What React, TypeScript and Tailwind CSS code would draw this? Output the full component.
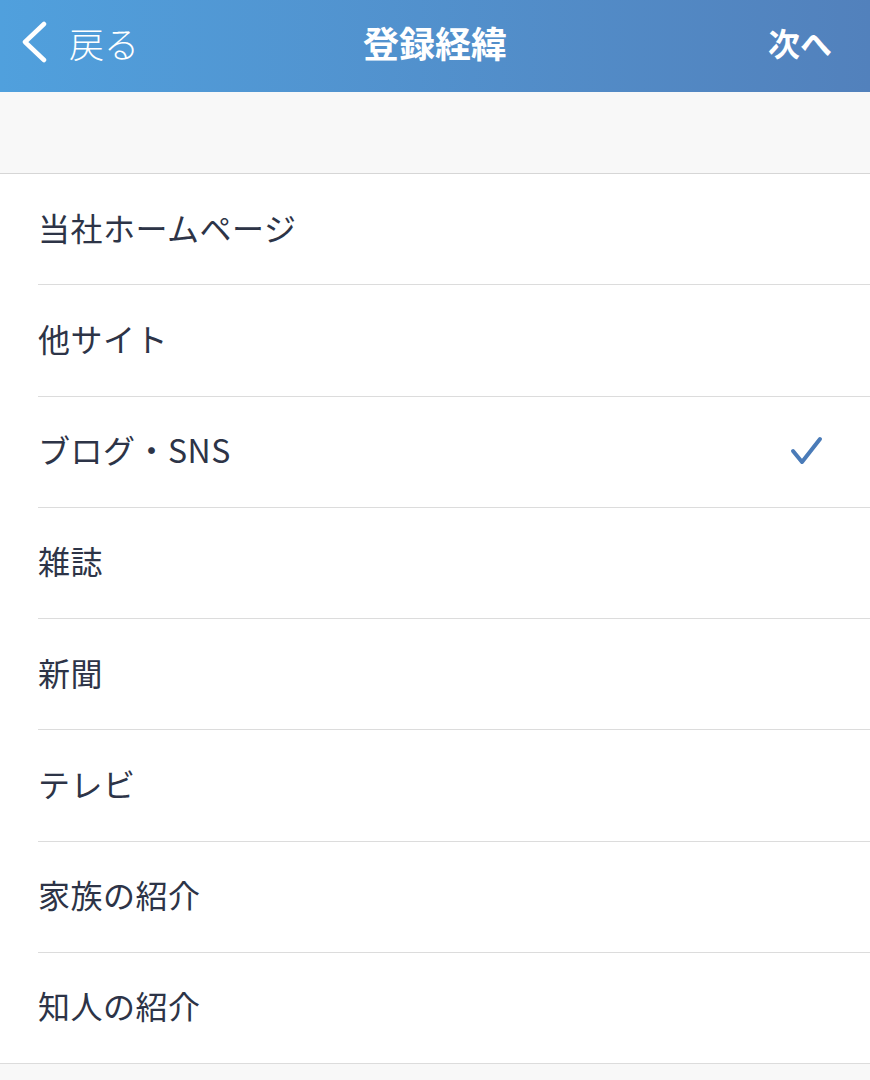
import { useState } from 'react';

const options = [
  '当社ホームページ',
  '他サイト',
  'ブログ・SNS',
  '雑誌',
  '新聞',
  'テレビ',
  '家族の紹介',
  '知人の紹介',
];

export default function App() {
  const [selected, setSelected] = useState(2);

  return (
    <div
      className="w-[870px] h-[1080px] bg-[#f8f8f8] overflow-hidden"
      style={{ fontFamily: '"Noto Sans CJK JP", "Noto Sans", sans-serif' }}
    >
      {/* ヘッダー */}
      <div className="h-[92px] pb-[8px] bg-linear-to-r from-[#50a0dd] to-[#5281bc] flex items-center text-white relative">
        <button className="flex items-center pl-[19px] gap-[20px]">
          <svg width="30" height="42" viewBox="0 0 30 42" fill="none">
            <path d="M25 3 L6 21 L25 39" stroke="white" strokeWidth="4.5" strokeLinecap="round" strokeLinejoin="round" />
          </svg>
          <span className="text-[35px] leading-none font-light">戻る</span>
        </button>
        <div className="absolute left-0 right-0 text-center text-[36px] font-bold leading-none pointer-events-none">登録経緯</div>
        <button className="ml-auto pr-[38px] text-[32px] font-bold leading-none">次へ</button>
      </div>

      {/* スペーサー */}
      <div className="h-[82px] border-b border-[#d6d6d6]" />

      {/* 選択肢リスト */}
      <div className="bg-white border-b border-[#dcdcdc]">
        {options.map((label, i) => (
          <div key={label} onClick={() => setSelected(i)} className="pl-[38px]">
            <div
              className={`flex items-center pr-[46px] pb-[5px] ${
                i < options.length - 1 ? 'h-[111.25px] border-b border-[#dcdcdc]' : 'h-[110.25px]'
              }`}
            >
              <span className="text-[32px] text-[#2d3447] tracking-[0.5px]">{label}</span>
              {selected === i && (
                <svg className="ml-auto mt-[4px]" width="34" height="30" viewBox="0 0 34 30" fill="none">
                  <path d="M3 15 L12 26 L30 3" stroke="#4a7bb8" strokeWidth="4" strokeLinecap="round" strokeLinejoin="round" />
                </svg>
              )}
            </div>
          </div>
        ))}
      </div>
    </div>
  );
}
